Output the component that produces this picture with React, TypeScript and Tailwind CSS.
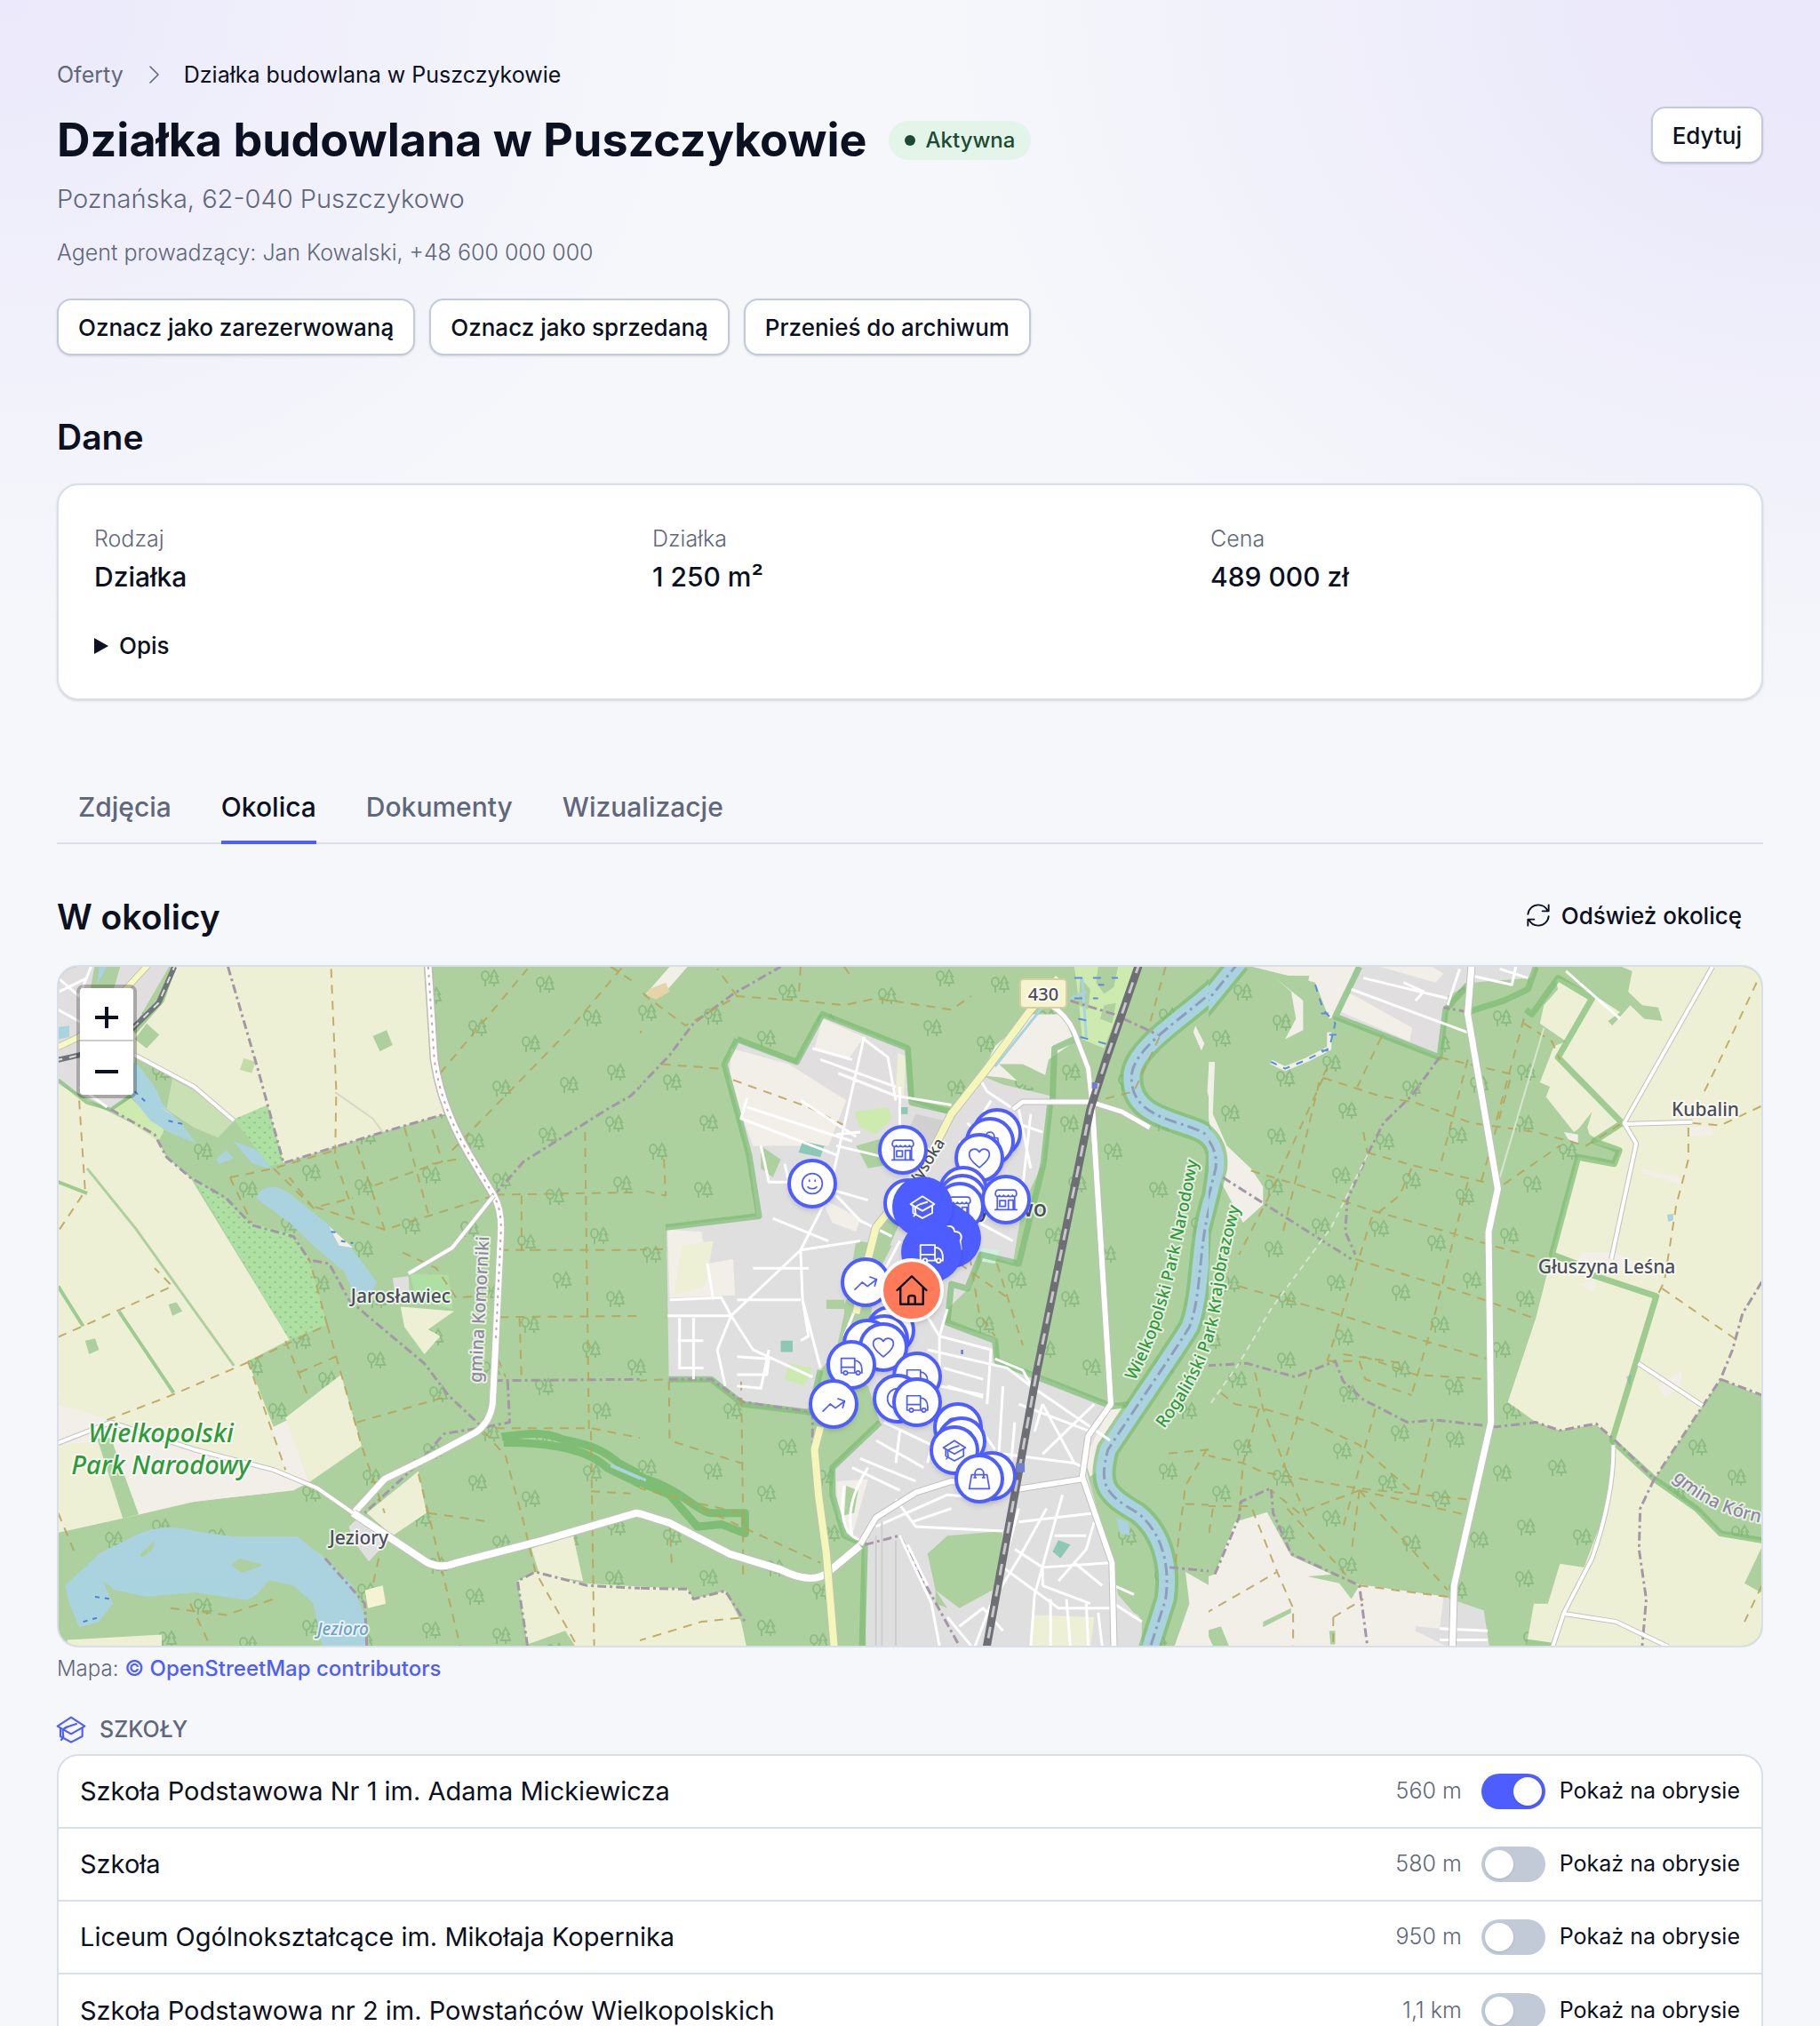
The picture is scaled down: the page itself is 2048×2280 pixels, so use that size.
import React, { useState } from "react";
import clsx from "clsx";

type IconName =
  | "shop"
  | "smile"
  | "heart"
  | "trend"
  | "truck"
  | "school"
  | "bag"
  | "tree"
  | "home"
  | "refresh"
  | "chevron";

const icons: Record<IconName, React.ReactNode> = {
  shop: (
    <>
      <path d="M4 2h16c2 0 3 1.500 3 4.500 0 2.500-3.300 3-4.200 1-.8 1.800-3.600 1.800-4.400 0-.9 1.800-3.900 1.800-4.800 0-.8 1.800-3.600 1.800-4.400 0C4.300 9.500 1 9 1 6.500 1 3.500 2 2 4 2z" />
      <path d="M3 9v13M21 9v13M.8 22.500h22.400M14.500 22v-9.500h5V22M5.500 13h6v6h-6z" />
    </>
  ),
  smile: (
    <>
      <circle cx="12" cy="12" r="10.500" />
      <path d="M7.500 15.500c2.200 2.400 6.800 2.400 9 0M9 8.500v1M15 8.500v1" />
    </>
  ),
  heart: (
    <path d="M12 22C8 18.500 1.500 14.500 1.500 8.500 1.500 2.500 9 .8 12 6c3-5.200 10.500-3.500 10.500 2.500 0 6-6.500 10-10.500 13.500z" />
  ),
  trend: <path d="M1 19.500 8.500 12l5.500 4.300L23.500 9M16.500 6.500l7 2.500-2 6.800" />,
  truck: (
    <>
      <path d="M3.800 20.300H1.500v-15h14v15H8.200M1.500 14.500h14M15.500 7.500c4 0 7.500 3 7.500 9v3.800h-1.800M16.800 20.300h-1.300" />
      <circle cx="6" cy="20.300" r="2" />
      <circle cx="19" cy="20.300" r="2" />
    </>
  ),
  school: (
    <>
      <path d="M12 2 .500 9.500 12 16l11.500-6.500z" />
      <path d="M16.500 7.500C12 9 5.500 10 5 13.500l.5 5.500-1.800 2M3 11.500V18l9 5 9.500-5v-6.500" />
    </>
  ),
  bag: (
    <path d="M4 8h16l2.500 14.500h-21zM7.500 11V6.500c0-6 9-6 9 0V11M6.500 11h2M15.500 11h2" />
  ),
  tree: <path d="M6 4C8-1 15 0 15.500 6c6-.5 8 5 5.500 9l1 8" />,
  home: (
    <path d="M1 12 12 1.500 23 12M3.500 10v12.500h17V10M9.500 22.500v-5c0-2 5-2 5 0v5" />
  ),
  refresh: (
    <path d="M21.200 8C19.600 4.500 16.100 2 12 2 6.800 2 2.600 6 2 11M16 8h6V2M2.900 16c1.500 3.500 5 6 9.100 6 5.200 0 9.500-4 10-9M8 16H2v6" />
  ),
  chevron: <path d="m8 3 9 9-9 9" />,
};

function Icon({ name, className }: { name: IconName; className?: string }) {
  return (
    <svg
      viewBox="0 0 24 24"
      fill="none"
      stroke="currentColor"
      strokeWidth={1.6}
      strokeLinecap="round"
      strokeLinejoin="round"
      aria-hidden="true"
      className={clsx("shrink-0 overflow-visible", className)}
    >
      {icons[name]}
    </svg>
  );
}

// x is measured from the middle of the map, y from its top edge
const pins: { x: number; y: number; icon: IconName; active?: boolean }[] = [
  { x: 98, y: 187, icon: "smile" },
  { x: 90, y: 197, icon: "bag" },
  { x: -8, y: 206, icon: "shop" },
  { x: 78, y: 215, icon: "heart" },
  { x: -110, y: 244, icon: "smile" },
  { x: 60, y: 252, icon: "smile" },
  { x: 59, y: 261, icon: "smile" },
  { x: 56, y: 270, icon: "shop" },
  { x: 108, y: 262, icon: "shop" },
  { x: -2, y: 266, icon: "heart" },
  { x: -50, y: 355, icon: "trend" },
  { x: -22, y: 409, icon: "smile" },
  { x: -29, y: 419, icon: "heart" },
  { x: -48, y: 424, icon: "trend" },
  { x: -30, y: 428, icon: "heart" },
  { x: -66, y: 448, icon: "truck" },
  { x: 8, y: 461, icon: "truck" },
  { x: -14, y: 486, icon: "smile" },
  { x: 8, y: 490, icon: "truck" },
  { x: -86, y: 492, icon: "trend" },
  { x: 54, y: 518, icon: "heart" },
  { x: 58, y: 534, icon: "shop" },
  { x: 50, y: 544, icon: "school" },
  { x: 92, y: 573, icon: "smile" },
  { x: 78, y: 576, icon: "bag" },
  { x: 36, y: 298, icon: "tree", active: true },
  { x: 46, y: 305, icon: "tree", active: true },
  { x: 14, y: 270, icon: "school", active: true },
  { x: 24, y: 321, icon: "truck", active: true },
];

const trees = [
  [308, 29], [352, 63], [284, 81], [408, 109], [356, 126], [294, 165],
  [426, 162], [498, 137], [346, 191], [468, 197], [419, 235], [498, 241],
  [38, 190], [62, 133], [88, 58], [343, 248], [46, 259], [396, 292],
  [462, 295], [14, 311], [343, 318], [96, 303], [413, 356], [486, 367],
  [54, 353], [358, 375], [114, 374], [18, 403], [422, 417], [87, 431],
  [357, 443], [486, 453], [34, 473], [302, 465], [427, 481], [99, 500],
  [115, 119], [113, 177], [122, 245], [162, 208], [150, 52], [224, 56],
  [178, 130], [219, 176], [213, 251], [155, 324], [138, 451], [246, 500],
  [420, 33], [471, 69], [19, 87], [485, 13], [35, 20], [284, 232],
  [260, 291], [219, 451], [273, 421], [294, 357],
];

function Fill({ d, c }: { d: string; c: string }) {
  return <path d={d} fill={c} />;
}

function Line({
  d,
  c = "#ffffff",
  w = 2,
  dash,
  o,
}: {
  d: string;
  c?: string;
  w?: number;
  dash?: string;
  o?: number;
}) {
  return (
    <path
      d={d}
      fill="none"
      stroke={c}
      strokeWidth={w}
      strokeDasharray={dash}
      strokeLinejoin="round"
      opacity={o}
      vectorEffect="non-scaling-stroke"
    />
  );
}

function Road({ d, w = 7, c = "#ffffff" }: { d: string; w?: number; c?: string }) {
  return (
    <>
      <Line d={d} c="#c3c1bd" w={w + 2} />
      <Line d={d} c={c} w={w} />
    </>
  );
}

const FARM = "#eef0d5";
const WOOD = "#add19e";
const TOWN = "#e0dfdf";
const LAND = "#f2efe9";
const WATER = "#aad3df";
const ORCHARD = "#aedfa3";
const PARK = "#cdebb0";
const EDGE = "#7dbd74";
const TRACK = "#b9a258";
const LIMIT = "#a596a8";

function WestTile() {
  return (
    <g clipPath="url(#west)">
      <g transform="translate(-26 -18) scale(.44643 .5102)">
        <Fill c={TOWN} d="M50 30H340L250 165V250L330 350 240 320 190 350 50 290z" />
        <Fill c={WOOD} d="M150 30H215L195 90 130 120zM280 160 312 185 280 215 250 195z" />
        <Fill c={FARM} d="M350 30H990L1000 200 1015 290 1040 358 875 400 625 468 585 340 500 372 420 318 250 230 245 165 300 130z" />
        <Fill c={WOOD} d="M850 188 885 175 900 208 868 222zM280 160 312 185 280 215 250 195z" />
        <Fill c="#c4dba5" d="M525 237 555 245 545 270 515 262z" />
        <Fill c={FARM} d="M50 290 150 340 300 405 330 455 390 500 640 858 535 905 600 1050 660 1170 600 1195 400 1215 220 1252 50 1285z" />
        <Fill c={PARK} d="M190 350 240 325 325 395 310 420z" />
        <Fill c={LAND} d="M50 1000 150 1025 190 1035 400 1098 590 1145 632 1150 595 1052 635 1035 690 1172 650 1190 380 1217 260 1243 190 1080 50 1090z" />
        <Fill c={FARM} d="M630 1030 770 935 822 1092 690 1172z" />
        <Fill c={WOOD} d="M155 1075H190L260 1243 220 1252zM125 860 150 855 160 880 135 890zM335 780 355 775 370 795 345 805z" />
        <Fill c={ORCHARD} d="M395 500 460 535 540 600 650 625 690 680 735 825 640 858zM500 372 585 340 625 468 590 475z" />
        <path d="M395 500 460 535 540 600 650 625 690 680 735 825 640 858zM500 372 585 340 625 468 590 475z" fill="url(#dots)" />
        <Fill c="#c8e0b4" d="M345 282 420 318 500 375 460 412 400 390 330 350z" />
        <Fill c={WATER} d="M245 245 262 255 300 300 325 345 365 378 405 425 340 402 290 375 240 320zM57 168 85 165V190L57 195zM455 460 480 440 500 458 462 470zM498 420 560 440 595 482 545 468zM160 35 180 35 155 75z" />
        <Fill c={WATER} d="M555 545C575 515 600 515 640 535L740 605 800 660 860 730 850 750C820 765 790 745 780 710L700 650 640 600z" />
        <Fill c={LAND} d="M740 608 800 655 765 650zM315 345 350 365 330 355z" />
        <Fill c={WATER} d="M75 1400 160 1330 250 1290Q320 1260 400 1280L500 1292H660L730 1340 800 1400 835 1480V1540H725L700 1440 650 1400 590 1388C570 1400 570 1420 530 1432L400 1415 280 1425 200 1410 170 1390 195 1440 160 1480 110 1492 85 1440z" />
        <Fill c={WOOD} d="M262 1333 300 1300 295 1320 270 1338zM492 1355 515 1340 575 1355 520 1372z" />
        <Fill c={FARM} d="M80 1520 318 1508V1540H80zM965 1148 985 1240 900 1290 835 1240zM1250 1318 1355 1290 1380 1390 1270 1375zM1215 1390 1260 1370 1380 1395 1640 1408 1640 1540H1365L1335 1500 1240 1530z" />
        <Fill c="#f4f3d4" d="M830 1410 875 1400 883 1440 838 1450z" />
        <Fill c={FARM} d="M920 785 1055 795 990 835 1020 850 980 890 930 830z" />
        <Fill c={TOWN} d="M900 722 940 718 943 760 905 750zM790 1270 820 1245 890 1300 840 1347 800 1300z" />
        <Fill c={ORCHARD} d="M943 712 1040 715 1052 790 960 770z" />

        <Line c={EDGE} w={4} o={0.7} d="M350 35 320 110 250 180M57 285 130 335 190 350 240 320M57 740 120 828M210 795 348 975M57 510 130 535" />
        <Line c={WOOD} w={3} d="M130 480 250 610 500 915" />
        <Line c={EDGE} w={9} d="M1175 1072C1250 1062 1290 1062 1330 1078 1400 1090 1430 1100 1470 1130L1568 1175M1180 1085C1260 1085 1380 1090 1440 1140L1568 1195" />
        <Line c={WATER} w={4} d="M1450 1135 1568 1180" />

        <Line c={LIMIT} w={3} dash="10 4 3 4" d="M485 35 560 260 585 340 625 468 875 400 1040 358M190 350 300 405 330 455 390 500 480 545 545 605 650 630 690 682 740 690 790 770 850 815 980 910 1040 980 1125 1050M1155 540 1230 465 1340 405 1440 350 1500 320 1568 262M1155 948 1568 945M1190 950 1195 1040 1125 1052 1030 1065 960 1135 830 1240M730 1340 830 1440 835 1533M1240 1533 1215 1390 1260 1370 1390 1400 1568 1408" />
        <Line c={TRACK} dash="10 8" o={0.85} d="M745 40 758 310 755 460 805 585M490 500 600 480 755 440M490 500 545 600M600 480 700 567 800 545M700 567 640 500M810 430 880 615 935 600M930 390 990 580M1000 395 1025 465 830 525M1060 460 1000 470M110 330 125 530 60 615M57 852 345 740 300 700M180 1035 330 985 535 908 735 825M535 905 630 1145M735 825 690 680M735 825 822 1092 880 1240M630 860 690 990M665 930 770 890M810 1040 1030 985M1020 270 1240 40M1050 440 1340 180 1480 35M1385 400 1395 1060M1160 538 1568 532M1170 660 1568 660M1170 808 1568 805M1225 540V660M1220 810 1225 945M1160 1053H1400L1568 1082M705 565 880 615M1155 540 935 600M955 1120 990 1240 1070 1533M990 1240 1150 1260M1130 1060 1185 1115 1230 1260 1260 1370 1365 1533M1400 1060 1408 1533M1400 1192 1500 1197M925 665 1010 700 1060 765 1150 760M340 1450 480 1465 600 1430M390 1440 440 1533M865 1340 850 1400M57 1240 100 1330M1165 900 1185 940M1450 35 1510 70" />

        <Line d="M990 35 1005 240C1020 330 1060 400 1090 445L1155 540" c="#b9b3b3" w={10} />
        <Road w={7} d="M990 35 1005 240C1020 330 1060 400 1090 445L1155 540Q1175 570 1173 620L1160 860 1152 1000Q1145 1040 1110 1062L990 1118 880 1165 802 1240" />
        <Line c="#c9a3b4" w={2} dash="3 6" d="M990 35 1005 240C1020 330 1060 400 1090 445L1155 540Q1175 570 1173 620L1160 860" />
        <Road w={4} d="M50 1088 190 1040 400 1100 600 1145 710 1185 800 1240M1155 540 1050 655 940 712M250 230 400 300 500 375" />
        <Road w={8} d="M800 1240 985 1348Q1020 1365 1060 1350L1280 1300 1515 1240 1568 1252" />
        <Line c="#d8d8c8" d="M755 312 850 370 875 400" />
        <Line w={3} d="M57 60 110 100 140 35M57 130 180 190M110 300 180 345M60 90 130 60" />
        <Road w={6} c="#f7fabf" d="M50 215 110 190 200 110 285 30" />
        <Line c="#70757a" w={6} d="M50 242 110 230 240 175 310 115 350 35" />
        <Line c="#e0e0e0" w={2} dash="8 8" d="M50 242 110 230 240 175 310 115 350 35" />
        <Line c="#4d80d8" w={2} dash="5 6" d="M250 310 280 335M335 375 370 382M745 620 770 622M770 640 800 645M150 1425 190 1430M120 1480 160 1470" />
      </g>
    </g>
  );
}

const RIVER =
  "M1550 25C1500 110 1300 190 1285 270 1275 360 1380 370 1450 395 1520 420 1500 470 1490 540 1450 640 1465 750 1430 830 1380 900 1300 1000 1225 1100 1200 1180 1220 1200 1300 1240 1370 1290 1380 1370 1370 1430L1330 1540";
const RAILWAY = "M1305 25 1220 240 1180 350 1045 930 1000 1150 918 1540";

function TownTile() {
  return (
    <g clipPath="url(#town)">
      <g transform="translate(634 -18) scale(.44643 .5102)">
        <Fill c={FARM} d="M0 1400 165 1408 180 1430 260 1412 300 1480 315 1540H0z" />
        <Fill c={LAND} d="M120 35H165L100 100 60 95zM1445 165 1468 205 1460 220 1440 180zM1480 240 1495 250 1480 330 1568 470V520L1500 400 1475 310z" />
        <Fill c="#e6d3aa" d="M68 85 110 70 120 90 85 108 62 98z" />
        <Fill c={PARK} d="M1140 35H1295L1270 90 1235 170 1215 215 1160 195 1150 100z" />
        <Fill c={WOOD} d="M1200 35 1250 35 1240 80 1215 95 1195 70zM1155 60 1180 85 1175 130 1150 120zM1215 120 1245 115 1235 160 1205 150z" />
        <Fill c={LAND} d="M1030 140H1110L1140 200 1075 240 1060 300 960 280 905 275 940 210z" />
        <Fill c={TOWN} d="M290 200 440 250 505 142 715 215 722 330 820 360 800 420 740 500 690 560 620 640 600 700 560 780 560 860 500 925 475 1015 305 995 225 945H118L112 610 340 585 320 450 260 250z" />
        <Fill c={TOWN} d="M905 275 960 295 1080 320 1060 470 1010 560 985 690 900 665 880 740 820 790 815 820 940 855V900L1235 1005 1165 1120 1175 1160 1240 1370 1310 1480V1540H615L610 1310 560 1290 530 1200 535 1140 650 1040 600 960 620 850 640 720 700 600 800 420z" />
        <Fill c={LAND} d="M275 215 420 250 565 330 520 430 330 430 270 290zM505 150 610 190 570 240 485 215zM115 615 200 620 215 690 280 680 285 760 120 765zM500 545 600 590 590 620 530 600zM1235 1000 1290 1010 1210 1140 1180 1160 1165 1120zM540 1170 620 1165 580 1290 545 1250z" />
        <Fill c={FARM} d="M150 650 230 640 210 740 130 760zM695 225 715 232 710 320 690 315z" />
        <Fill c={PARK} d="M585 355 670 345 680 370 640 405 600 390zM420 910 480 920 460 960 410 945z" />
        <Fill c="#8cc8b4" d="M455 420 510 430 500 455 445 445zM400 860H430V885H400zM700 345H720V360H700zM1100 1300 1130 1310 1105 1340 1085 1325z" />
        <Fill c="#d0efe0" d="M905 655 950 660 940 690 905 685z" />
        <Fill c="#d2d0d2" d="M740 360 815 375 780 440 720 400z" />
        <Fill c={WOOD} d="M590 430 650 415 680 470 620 480zM590 640 680 650 640 720 600 800 575 830 570 740zM515 770H560V790H515zM560 800 600 830 560 870 545 930 620 960 650 1040 540 1110 480 1030 500 930 540 880zM350 430 400 460 380 500 350 480zM820 1290 960 1280 945 1405 850 1450 790 1410 770 1330zM790 1410 820 1450 790 1440zM565 1180 595 1190 585 1240 560 1245zM950 250 1010 250 1080 280 1060 310 1000 290zM1240 1370 1310 1400 1330 1480 1290 1460 1250 1420z" />
        <Fill c={LAND} d="M1420 1370 1480 1400V1540H1390L1430 1440z" />
        <Fill c={FARM} d="M1035 1465 1190 1470 1180 1540H1030z" />

        <Line c={EDGE} w={7} o={0.7} d="M290 195 440 245 505 140 720 215 730 335 830 355M290 195 258 250 320 450 345 585 110 610M118 945H225L305 1000 475 1018 500 925M1085 330 1090 215 1140 195M1080 330 1062 470 1000 690 905 670 870 745 830 735 820 820 940 860 945 905 1235 1005 1280 1000M650 1040 530 1140V1200L560 1290 612 1310 605 1533" />
        <Line c={EDGE} w={26} o={0.7} d={RIVER} />
        <Line c={EDGE} w={9} d="M0 1140 60 1165C150 1190 180 1230 220 1240H310V1285L250 1265 190 1270 120 1200 0 1155" />
        <Line c={WATER} w={3} d="M0 1145 60 1168M1110 70 940 255M1160 60 1170 190M1130 105 1170 90" />
        <Line c={WATER} w={18} d={RIVER} />
        <Line c="#8f9dbb" w={3} dash="14 5 3 5" d={RIVER} />
        <Fill c={WATER} d="M1245 1250 1275 1260 1280 1290 1255 1285z" />

        <Line c={LIMIT} w={3} dash="10 4 3 4" d="M0 340 120 230 180 160 280 95 400 35M118 945H225L305 995 480 1018V1100L510 1300M612 1310 700 1290 760 1390 850 1533M1130 110 1240 140 1350 185M0 1405 165 1408 180 1430 260 1412 310 1480M1480 915H1568M1380 1360 1500 1370 1568 1260" />
        <Line c={TRACK} dash="10 8" o={0.85} d="M0 40 60 100 160 165 290 100 450 110 560 120 640 105 830 130 880 100M290 100 240 40M450 35 445 105M560 35 580 60M0 210 60 170M100 250 250 260M280 285 470 345 560 385M60 530 110 540 105 450M0 660 110 658M0 950 118 945M118 950 120 1080 300 1130M300 950 305 1250M120 1260 125 1350M0 1175 150 1210 300 1240M200 1230 400 1310 500 1350M305 1250V1380M0 1533 200 1480 310 1470M870 640 900 800 940 850M945 690 1010 870M1370 35 1330 160M1180 335 1290 310 1360 180M1480 1100 1360 1110M1420 1220 1568 1225M1395 1350 1420 1180 1568 960M1500 1220 1490 1350M850 690 980 770" />

        <Line w={3} d="M610 190 520 540 450 660 455 770 500 920M450 330 590 410M315 325 300 370 540 450M315 345 580 420M500 240 690 300M610 195 670 235 690 330M480 215 580 240M545 270 690 320 830 340M350 430 370 510 420 510 410 470M540 540 600 595 680 630M540 405 600 400M540 430 660 455M500 520 620 550M120 770 250 765 275 805 450 660 600 640M115 805H275L330 880 480 940M215 690 230 770M145 810V920H205M180 810V945M140 860H205M275 805 240 880 260 960M290 770H450M330 700H470M370 880 350 965 290 960M290 895 370 900 365 935H290M455 770 470 850 450 860M380 590 520 640M630 700 560 850" />
        <Line w={3} d="M700 300 700 440M900 280 920 310 980 345M870 380 950 450M850 420 920 500M1000 350 1030 480M930 330 880 400M1030 360 1010 520M960 370 1060 400M900 600 985 640M700 640 640 740M730 750 800 850 820 790M800 850 930 880 920 1000M800 850V960L910 980M770 880 970 920 1030 960 1230 1080M940 900 1010 925 1035 965M810 920 910 945M820 960 910 985M900 1050 940 1100M960 960 945 1180M1060 1000 1140 1130 1165 1140M1060 1000 1040 1060M1190 1000 1060 1110M990 1040 975 1180M960 1110 1140 1130M1000 1000 1180 1060M660 1040 780 1090 770 1130M640 1080 760 1140M600 1120 740 1170M700 1060 690 1130M580 1140 700 1190M560 1180Q540 1290 605 1300M580 1290Q560 1220 620 1140M690 1210 740 1270 960 1280M640 1270 820 1200 950 1210M700 1290 780 1440 800 1533M720 1310 770 1400M730 1260 830 1230" />
        <Line w={3} d="M1000 1230 960 1360M1070 1230 1000 1340 930 1440 890 1533M1110 1200 1040 1420 1030 1533M990 1320 1060 1360 1230 1350M960 1360 1100 1450 1240 1450M1000 1260 1190 1240M1100 1390 1170 1320 1190 1260M1060 1400 1180 1440M1140 1350 1210 1400M1080 1430V1533M1120 1430 1130 1533M1170 1440 1175 1533M1240 1440 1310 1480M1240 1400 1290 1420M850 1490 910 1450 960 1500M820 1470 880 1533M1200 1460 1210 1533M1090 1290 1170 1290M1060 1360V1400" />
        <Line c="#cfcdcd" d="M655 1260V1533M690 1300V1533M640 1290 640 1533" />

        <Road w={5} d="M1080 120Q1120 140 1140 180L1175 260 1185 340M985 350 1010 333H1180L1260 355 1330 390" />
        <Road w={6} d="M1185 340 1232 1000 1175 1070 1160 1160 1235 1350 1240 1540M600 1310 640 1250 740 1195 830 1170 1000 1187 1160 1165" />
        <Road w={8} d="M-10 1232 40 1240 120 1262 270 1330 400 1365Q480 1400 520 1370L600 1312" />
        <Road w={8} c="#f4f7b8" d="M1100 60 1030 130 920 260 830 360 760 480 640 610 620 680 590 800M500 1050 485 1100 495 1200 515 1330 535 1540" />
        <Line c="#6d6f74" w={9} d={RAILWAY} />
        <Line c="#c9c9c9" w={3} dash="13 11" d={RAILWAY} />
        <Fill c="#6f7fd0" d="M993 1130H1015V1150H993zM1184 290H1198V304H1184zM854 880H860V890H854z" />
        <Line c="#5a8de0" w={2} dash="9 12" d="M1140 60H1250M1140 105H1200M1150 150 1180 155M1155 190 1240 210M1200 75H1215" />
      </g>
    </g>
  );
}

const RIVER_EAST = "M120 25 0 155M0 385Q70 420 62 480L22 620 8 830";

function EastTile() {
  return (
    <g clipPath="url(#east)">
      <g transform="translate(1274 -18) scale(.45152 .5102)">
        <Fill c={LAND} d="M130 30H420L370 140 345 150 310 70 265 60zM210 60 280 110V175L235 195 262 150 250 90zM45 245 60 245 55 360 90 430 150 480 180 520V560L130 600 75 510 40 350zM10 160 32 205 25 215z" />
        <Fill c={WOOD} d="M230 55 295 55 290 85 240 80z" />
        <Fill c={LAND} d="M-20 1400 60 1375 110 1260 190 1238 250 1335 400 1395 640 1425 655 1540H-20z" />
        <Fill c={TOWN} d="M415 30H860L850 60 700 70 640 100 620 235 360 145zM560 1490 620 1495 630 1425 730 1455 745 1540H650L560 1500z" />
        <Fill c={LAND} d="M375 135 545 200 552 170 400 95 380 100zM470 35H600L630 50 610 70z" />
        <Fill c={WOOD} d="M38 1500 75 1490 95 1533H55zM290 1380 360 1375 420 1400 400 1430 370 1395zM180 1480 250 1450V1460L180 1492zM345 1500H360V1530H348z" />
        <Fill c={FARM} d="M900 30H1430V985L1320 945 1155 1165 1050 1075 1010 1045 920 1058 860 1040 790 995 860 810 900 670 965 455 1055 470 1070 440 1000 425 985 380 955 400 885 322 895 300 870 290 905 210 935 200 870 160 880 120 915 85z" />
        <Fill c={WOOD} d="M860 30H1060L1100 45 1090 90 1125 120 1165 125 1175 155 1130 150 1095 120 1050 165 1040 155 1070 135 1000 95 915 60 850 140 835 130zM960 400 1000 355 985 400 1020 420 960 440z" />
        <Fill c={LAND} d="M930 400 965 405V425L940 415zM975 665 1060 665 1130 700 1020 710 960 690zM1240 388 1300 390V405L1245 410zM975 735 1010 725 1005 755zM1125 480 1220 500V515L1125 490zM1165 960 1225 925 1220 960 1180 985zM1355 1440 1380 1410 1375 1480z" />
        <Fill c={FARM} d="M1055 1080 1155 1165 1270 1240 1320 1285 1430 1302 1380 1395 1430 1420V1540H835L855 1440H890L920 1352 980 1360 1040 1220z" />
        <Fill c={WATER} d="M1187 582 1202 580V595L1190 598zM1085 940 1098 935 1095 960z" />

        <Line c={EDGE} w={26} o={0.7} d={RIVER_EAST} />
        <Line c={WATER} w={18} d={RIVER_EAST} />
        <Line c="#8f9dbb" w={3} dash="14 5 3 5" d={RIVER_EAST} />
        <Line c={EDGE} w={7} o={0.7} d="M420 35 360 145 620 235 635 130 690 75M690 135 780 110 840 85 860 35M835 130 850 140 915 60 1000 105 915 235 1075 380 1005 420 1068 440 1055 470 965 455 900 670 960 690M1000 715 1160 762 1050 1080 1155 1165 1260 1230 1320 1285 1423 1300M835 1525 900 1533" />

        <Line c={LIMIT} w={3} dash="10 4 3 4" d="M620 235 550 320 480 380 440 450 390 550 385 620 410 670M80 500 400 680M40 915 140 910 260 940 360 905 380 950 430 990 540 1040 610 1035 760 1050 860 1040 920 1058 1010 1043 1055 1078 1155 1165M690 135 630 125M1423 730 1375 800 1350 880 1320 945 1155 1165M1320 945 1423 980M1155 1165 1120 1230 1117 1320 1135 1430 1125 1533M60 1375 120 1250 125 1215 200 1185 205 1240 250 1330 420 1400 440 1533" />
        <Line c={TRACK} dash="10 8" o={0.85} d="M330 280 470 320 560 335 700 380 860 400 985 430 1075 380M330 280 190 550 120 670M330 275 345 250M320 290 230 620M475 190 415 300M690 240 620 480M620 235 800 272 720 520M830 150 760 380M150 485 280 520 440 570 640 620 750 650 880 680M440 445 560 475 730 510M550 480 520 540 450 590 340 905M430 400 440 445M120 740 360 800 580 860 740 900M410 680 700 760 860 812M690 510 600 830 550 980M430 895 560 935 740 945M340 905 420 905 435 945 550 980M380 890 530 910M0 1105 130 1130 180 1150 410 1185 690 1210M75 975 110 1000 180 1010 300 1040 420 1090 560 1200M160 930 180 1010 240 1150 290 1250M170 1010 130 1130 120 1250M300 925 230 1140M460 1010 380 1270M605 1040 560 1220M420 1190 270 1240 200 1190M420 1190 640 1410M420 1190 690 1245M420 1190 400 1330M240 1230 400 1390M0 1225 150 1225 215 1370 255 1450V1533M55 1230 30 1370M0 1480 215 1370M420 1400 640 1425M355 1470 430 1430M355 1470V1533M780 515 920 430M1240 390 1240 460 1210 560 1180 730 1160 765M1280 310 1330 220 1410 70M1250 380 1320 385 1423 342M1175 745 1355 855M1423 1400 1380 1480M830 160 900 200 920 240" />

        <Line w={3} d="M430 60 640 105M400 85 690 180M530 70 580 90 560 110M700 55 800 75 810 35M770 40 840 60M670 40 640 120M935 45 1070 150M620 1495 740 1500M620 1520H740" />
        <Line c="#d6e6cf" w={2} d="M880 170 770 500" />
        <Line c="#d6e6cf" dash="7 5" d="M440 450 350 610 200 790 120 910 40 1010 0 1170" />
        <Road w={4} d="M1300 35 1080 380 1110 425 1048 680M1080 382 1250 378M1053 1090Q1055 1200 1000 1340L930 1460 900 1540M930 1462 1060 1480 1190 1535M1115 910 1275 1003" />
        <Road w={7} d="M700 30 690 140 765 525 742 620 748 1040 656 1400 652 1540" />
        <Line c={LAND} w={5} d="M345 180 345 215 290 240 235 260 200 245" />
        <Line c="#5a8de0" w={2} dash="8 8" d="M310 75 330 130 360 160 345 215 290 240 235 260 200 245M325 138H350M325 220H350M345 185H370" />
      </g>
    </g>
  );
}

function MapCanvas() {
  return (
    <svg
      viewBox="0 0 1916 764"
      preserveAspectRatio="xMidYMid slice"
      className="h-full w-full"
      role="img"
      aria-label="Mapa okolicy"
    >
      <defs>
        <g id="tree" fill="none" stroke="#8ebd83" strokeWidth="2">
          <ellipse cx="-5" cy="-3" rx="4" ry="5" />
          <path d="M-5 2v7M5 5v4M5-9 1-2h2L0 5h10L7-2h2z" />
        </g>
        <pattern id="wood" width="512" height="512" patternUnits="userSpaceOnUse">
          {trees.map(([x, y]) => (
            <use key={`${x}-${y}`} href="#tree" x={x} y={y} />
          ))}
        </pattern>
        <pattern id="dots" width="26" height="22" patternUnits="userSpaceOnUse">
          <ellipse cx="6" cy="5" rx="3" ry="2" fill="#7fc078" />
          <ellipse cx="19" cy="16" rx="3" ry="2" fill="#7fc078" />
        </pattern>
        <clipPath id="west">
          <path d="M0 0H654V764H0z" />
        </clipPath>
        <clipPath id="town">
          <path d="M654 0H1294V764H654z" />
        </clipPath>
        <clipPath id="east">
          <path d="M1294 0H1916V764H1294z" />
        </clipPath>
        <path id="park-narodowy" d="M1211 466 Q1240 415 1258 335 T1290 170" />
        <path id="park-krajobrazowy" d="M1244 520 C1282 470 1300 430 1308 380 C1310 340 1322 300 1342 220" />
        <path id="gmina" d="M1816 576 Q1862 622 1946 630" />
      </defs>
      <rect width="1916" height="764" fill={WOOD} />
      <rect width="1916" height="764" fill="url(#wood)" />
      <WestTile />
      <TownTile />
      <EastTile />
      <rect x="1082" y="14" width="52" height="32" rx="4" fill="#f5f3d0" stroke="#d8cfa0" strokeWidth="2" />
      <g
        fontFamily="'Noto Sans', sans-serif"
        fontSize="21"
        fontWeight="500"
        fill="#4a4d5a"
        stroke="#ffffff"
        strokeOpacity="0.7"
        strokeWidth="4"
        strokeLinejoin="round"
        style={{ paintOrder: "stroke" }}
      >
        <text x="385" y="378" textAnchor="middle">Jarosławiec</text>
        <text x="338" y="650" textAnchor="middle">Jeziory</text>
        <text x="1853" y="168" textAnchor="middle">Kubalin</text>
        <text x="1742" y="345" textAnchor="middle">Głuszyna Leśna</text>
        <text x="1112" y="281" textAnchor="end" fontSize="25">Puszczykowo</text>
        <text x="1108" y="38" textAnchor="middle" fontSize="20">430</text>
        <text fontSize="18" textAnchor="middle" transform="translate(980 226) rotate(-58)">Wysoka</text>
        <g fill="#2f9a3a" fontStyle="italic" fontSize="29">
          <text x="115" y="535" textAnchor="middle">Wielkopolski</text>
          <text x="115" y="571" textAnchor="middle">Park Narodowy</text>
        </g>
        <g fill="#2f9a3a" fontSize="19">
          <text>
            <textPath href="#park-narodowy">Wielkopolski Park Narodowy</textPath>
          </text>
          <text>
            <textPath href="#park-krajobrazowy">Rogaliński Park Krajobrazowy</textPath>
          </text>
        </g>
        <g fill="#8f86a0" fontSize="20">
          <text textAnchor="middle" transform="translate(480 386) rotate(-87)">gmina Komorniki</text>
          <text>
            <textPath href="#gmina">gmina Kórnik</textPath>
          </text>
        </g>
        <text x="320" y="752" textAnchor="middle" fontSize="19" fontStyle="italic" fill="#6f9fc6">
          Jezioro
        </text>
      </g>
    </svg>
  );
}

function AreaMap() {
  return (
    <div className="relative h-[768px] overflow-hidden rounded-3xl border-2 border-[#d9deeb] bg-[#add19e]">
      <MapCanvas />
      {pins.map((pin) => (
        <button
          key={`${pin.x}:${pin.y}`}
          type="button"
          aria-label={pin.icon}
          style={{ left: `calc(50% + ${pin.x}px)`, top: pin.y }}
          className={clsx(
            "absolute flex -translate-x-1/2 -translate-y-1/2 items-center justify-center rounded-full shadow-md",
            pin.active
              ? "size-[68px] bg-[#4d5dff] text-white"
              : "size-14 border-4 border-[#4d5dff] bg-white text-[#4d5dff]"
          )}
        >
          <Icon name={pin.icon} className={pin.active ? "size-7" : "size-[26px]"} />
        </button>
      ))}
      <div className="absolute top-[364px] left-[calc(50%+2px)] flex size-[72px] -translate-x-1/2 -translate-y-1/2 items-center justify-center rounded-full border-4 border-white bg-[#ff7a59] text-[#0b1120] shadow-md">
        <Icon name="home" className="size-9" />
      </div>
      <div className="absolute top-5 left-5 flex w-[68px] flex-col overflow-hidden rounded-lg border-4 border-black/25 bg-clip-padding">
        <button type="button" aria-label="Przybliż" className="flex h-[60px] items-center justify-center border-b-2 border-[#cccccc] bg-white pt-2">
          <svg viewBox="0 0 26 26" className="size-[26px]" stroke="#0b1120" strokeWidth="4" aria-hidden="true">
            <path d="M0 13h26M13 1v24" />
          </svg>
        </button>
        <button type="button" aria-label="Oddal" className="flex h-[60px] items-center justify-center bg-white pt-2">
          <svg viewBox="0 0 26 26" className="size-[26px]" stroke="#0b1120" strokeWidth="4" aria-hidden="true">
            <path d="M0 13h26" />
          </svg>
        </button>
      </div>
    </div>
  );
}

function OutlineButton({ children }: { children: React.ReactNode }) {
  return (
    <button
      type="button"
      className="h-16 rounded-2xl border-2 border-[#c2cadb] bg-white px-[22px] text-[26px] font-medium shadow-sm"
    >
      {children}
    </button>
  );
}

const details = [
  { label: "Rodzaj", value: "Działka" },
  { label: "Działka", value: "1 250 m²" },
  { label: "Cena", value: "489 000 zł" },
];

const tabs = ["Zdjęcia", "Okolica", "Dokumenty", "Wizualizacje"];

const schools = [
  { name: "Szkoła Podstawowa Nr 1 im. Adama Mickiewicza", distance: "560 m", visible: true },
  { name: "Szkoła", distance: "580 m", visible: false },
  { name: "Liceum Ogólnokształcące im. Mikołaja Kopernika", distance: "950 m", visible: false },
  { name: "Szkoła Podstawowa nr 2 im. Powstańców Wielkopolskich", distance: "1,1 km", visible: false },
];

function PlaceRow({ place }: { place: (typeof schools)[number] }) {
  const [visible, setVisible] = useState(place.visible);

  return (
    <li className="flex h-[82px] items-center border-b-2 border-[#d9deeb] px-6 last:border-b-0">
      <span className="flex-1 text-[29px]">{place.name}</span>
      <span className="mr-[22px] text-[25px] font-light text-[#5f677b]">{place.distance}</span>
      <label className="flex items-center gap-4 text-[25px]">
        <input
          type="checkbox"
          role="switch"
          checked={visible}
          onChange={(e) => setVisible(e.target.checked)}
          className="h-10 w-[72px] appearance-none rounded-full bg-[#c2cad8] p-1 before:block before:size-8 before:rounded-full before:bg-white before:shadow-sm checked:bg-[#4d5dff] checked:before:translate-x-8"
        />
        Pokaż na obrysie
      </label>
    </li>
  );
}

export default function App() {
  const [tab, setTab] = useState("Okolica");

  return (
    <div className="h-screen overflow-hidden bg-[#f6f7fb] bg-[radial-gradient(ellipse_800px_700px_at_0%_0%,#ebe9fb_0%,#f6f7fb00_100%),radial-gradient(ellipse_1000px_820px_at_100%_0%,#eae8fa_15%,#f6f7fb00_100%)] font-['Inter',sans-serif] text-[#0b1120]">
      <main className="px-16 pt-16">
        <nav aria-label="Okruszki" className="flex items-center gap-[22px] text-[25px] leading-10">
          <a href="#oferty" className="text-[#5f677b]">Oferty</a>
          <Icon name="chevron" className="size-6 text-[#5f677b]" />
          <span>Działka budowlana w Puszczykowie</span>
        </nav>

        <header className="mt-4 flex items-start justify-between">
          <div>
            <div className="flex items-center gap-6">
              <h1 className="text-[52px] leading-[76px] font-bold">
                Działka budowlana w Puszczykowie
              </h1>
              <span className="flex h-11 items-center gap-3 rounded-full bg-[#e3f5e8] px-[18px] text-2xl font-medium text-[#1c4a33]">
                <span className="size-3 rounded-full bg-[#1c4a33]" />
                Aktywna
              </span>
            </div>
            <p className="mt-2 text-[29px] leading-10 font-light text-[#5f677b]">
              Poznańska, 62-040 Puszczykowo
            </p>
            <p className="mt-5 text-[25px] leading-10 font-light text-[#5f677b]">
              Agent prowadzący: Jan Kowalski, +48 600 000 000
            </p>
          </div>
          <OutlineButton>Edytuj</OutlineButton>
        </header>

        <div className="mt-8 flex gap-4">
          <OutlineButton>Oznacz jako zarezerwowaną</OutlineButton>
          <OutlineButton>Oznacz jako sprzedaną</OutlineButton>
          <OutlineButton>Przenieś do archiwum</OutlineButton>
        </div>

        <h2 className="mt-[68px] text-[39px] leading-[48px] font-semibold">Dane</h2>
        <section className="mt-7 rounded-3xl border-2 border-[#d9deeb] bg-white p-10 shadow-sm">
          <dl className="grid grid-cols-3 gap-12">
            {details.map((item) => (
              <div key={item.label}>
                <dt className="text-[25px] leading-10 font-light text-[#5f677b]">{item.label}</dt>
                <dd className="text-[30px] leading-[46px] font-medium">{item.value}</dd>
              </div>
            ))}
          </dl>
          <details className="mt-9">
            <summary className="flex items-center gap-3 text-[26px] leading-[38px] font-medium">
              <svg viewBox="0 0 16 18" className="h-[18px] w-4" fill="currentColor" aria-hidden="true">
                <path d="M0 0 16 9 0 18z" />
              </svg>
              Opis
            </summary>
          </details>
        </section>

        <div role="tablist" className="mt-22 flex gap-14 border-b-2 border-[#d9deeb] pl-6">
          {tabs.map((name) => (
            <button
              key={name}
              type="button"
              role="tab"
              aria-selected={name === tab}
              onClick={() => setTab(name)}
              className={clsx(
                "-mb-0.5 border-b-4 pb-1.5 text-[30px] leading-[64px] font-medium",
                name === tab
                  ? "border-[#4d5dff]"
                  : "border-transparent text-[#5f677b]"
              )}
            >
              {name}
            </button>
          ))}
        </div>

        <div className="mt-12 mb-6 flex h-16 items-center justify-between">
          <h2 className="pt-1 text-[39px] leading-[48px] font-semibold">W okolicy</h2>
          <button type="button" className="flex h-16 items-center gap-3 px-6 text-[26px] font-medium">
            <Icon name="refresh" className="size-7" />
            Odśwież okolicę
          </button>
        </div>

        <AreaMap />
        <p className="mt-1 text-2xl leading-10 font-light text-[#5f677b]">
          Mapa:{" "}
          <a href="#osm" className="font-medium text-[#4d5dff]">
            © OpenStreetMap contributors
          </a>
        </p>

        <h3 className="mt-7 flex items-center gap-4 text-[25px] leading-10 font-medium text-[#5f677b]">
          <Icon name="school" className="size-8 text-[#4d5dff]" />
          SZKOŁY
        </h3>
        <ul className="mt-2 rounded-3xl border-2 border-[#d9deeb] bg-white">
          {schools.map((place) => (
            <PlaceRow key={place.name} place={place} />
          ))}
        </ul>
      </main>
    </div>
  );
}
